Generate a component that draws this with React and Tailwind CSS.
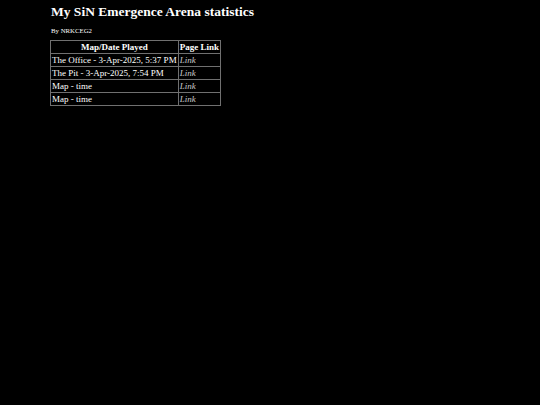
import React from 'react';

const games = [
  { map: 'The Office - 3-Apr-2025, 5:37 PM', link: 'Link' },
  { map: 'The Pit - 3-Apr-2025, 7:54 PM', link: 'Link' },
  { map: 'Map - time', link: 'Link' },
  { map: 'Map - time', link: 'Link' },
];

const App = () => {
  return (
    <div className="min-h-[405px] bg-black text-white font-['Liberation_Serif',serif] pl-[51px] pt-[3px]">
      <h1 className="text-[13.5px] font-bold leading-[18px]">My SiN Emergence Arena statistics</h1>
      <p className="text-[6.8px] mt-[5px] leading-[9px]">By NRKCEG2</p>

      {/* Stats table */}
      <table className="mt-[5px] -ml-px border-collapse border border-[#707070] text-[9px] leading-[12px]">
        <thead>
          <tr>
            <th className="border border-[#707070] px-px font-bold">Map/Date Played</th>
            <th className="border border-[#707070] px-px font-bold">Page Link</th>
          </tr>
        </thead>
        <tbody>
          {games.map((g, i) => (
            <tr key={i}>
              <td className="border border-[#707070] px-px text-left">{g.map}</td>
              <td className="border border-[#707070] px-px text-left italic text-[#c8c8c8]">{g.link}</td>
            </tr>
          ))}
        </tbody>
      </table>
    </div>
  );
};

export default App;
